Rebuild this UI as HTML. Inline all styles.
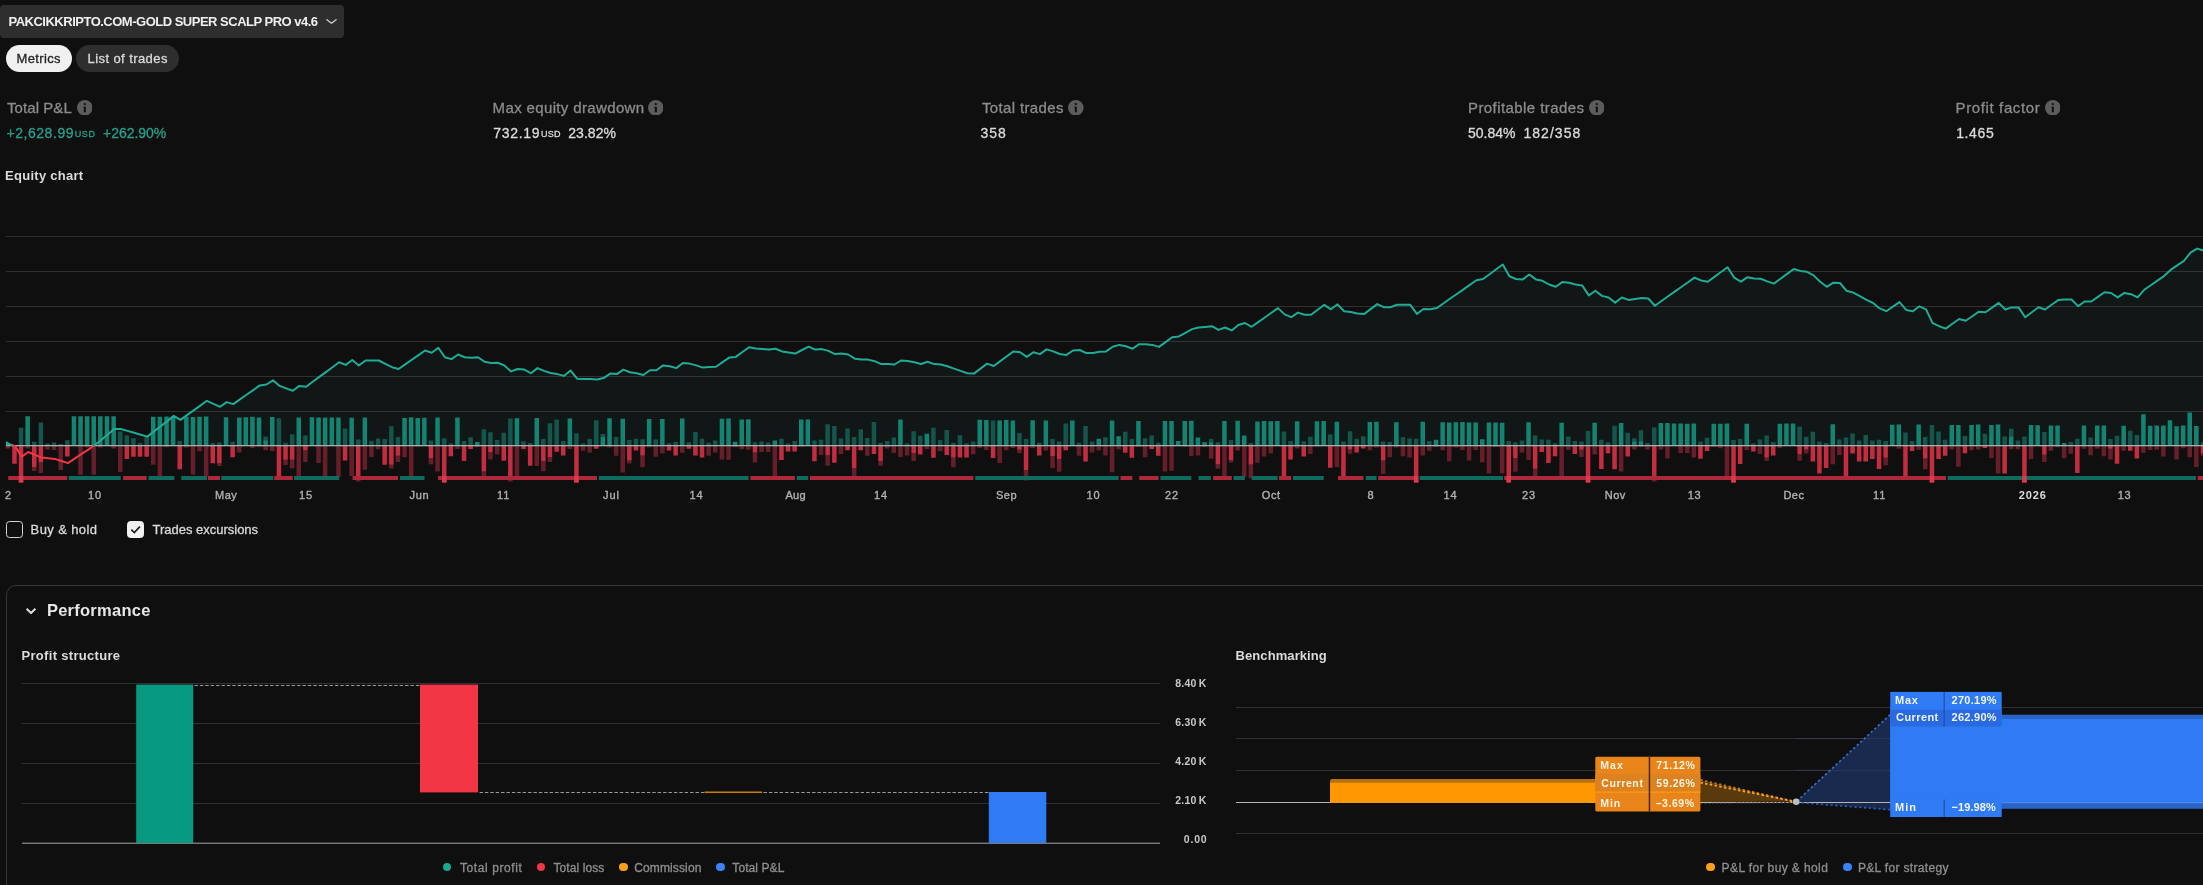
<!DOCTYPE html>
<html lang="en"><head><meta charset="utf-8"><title>Strategy report</title>
<style>
html,body{margin:0;padding:0;background:#0f0f0f;}
body{width:2203px;height:885px;overflow:hidden;position:relative;font-family:"Liberation Sans",sans-serif;color:#dbdbdb;}
.abs{position:absolute;}
.t{position:absolute;white-space:nowrap;line-height:1;}
#tx{position:absolute;left:0;top:0;width:2203px;height:885px;will-change:transform;}
.cb{position:absolute;box-sizing:border-box;width:17px;height:17px;border:1.3px solid #d4d4d4;border-radius:3.5px;top:521px;}
.dot{position:absolute;width:8.4px;height:8.4px;border-radius:50%;top:863px;}
</style></head><body>
<div class="abs" style="left:0;top:5px;width:344px;height:33px;background:#2e2e2e;border-radius:4px"></div>
<svg class="abs" style="left:325px;top:17px" width="13" height="9" viewBox="0 0 13 9"><path d="M1.9 2.7L6.5 6.2 11.1 2.7" fill="none" stroke="#d0d0d0" stroke-width="1.3" stroke-linecap="round" stroke-linejoin="round"/></svg>
<div class="abs" style="left:5.9px;top:45px;width:66.3px;height:27px;border-radius:13.5px;background:#f0f0f0"></div>
<div class="abs" style="left:76.3px;top:45px;width:102.5px;height:27px;border-radius:13.5px;background:#2e2e2e"></div>
<svg class="abs" style="left:76.9px;top:99.7px" width="15.6" height="15.6" viewBox="0 0 15 15"><circle cx="7.5" cy="7.5" r="7.5" fill="#5c5c5c"/><path d="M5.9 6.5h2.6v5.3H6.6V7.4H5.9z" fill="#0f0f0f"/><circle cx="7.5" cy="3.9" r="1.1" fill="#0f0f0f"/></svg>
<svg class="abs" style="left:647.9px;top:99.7px" width="15.6" height="15.6" viewBox="0 0 15 15"><circle cx="7.5" cy="7.5" r="7.5" fill="#5c5c5c"/><path d="M5.9 6.5h2.6v5.3H6.6V7.4H5.9z" fill="#0f0f0f"/><circle cx="7.5" cy="3.9" r="1.1" fill="#0f0f0f"/></svg>
<svg class="abs" style="left:1068.0px;top:99.7px" width="15.6" height="15.6" viewBox="0 0 15 15"><circle cx="7.5" cy="7.5" r="7.5" fill="#5c5c5c"/><path d="M5.9 6.5h2.6v5.3H6.6V7.4H5.9z" fill="#0f0f0f"/><circle cx="7.5" cy="3.9" r="1.1" fill="#0f0f0f"/></svg>
<svg class="abs" style="left:1588.9px;top:99.7px" width="15.6" height="15.6" viewBox="0 0 15 15"><circle cx="7.5" cy="7.5" r="7.5" fill="#5c5c5c"/><path d="M5.9 6.5h2.6v5.3H6.6V7.4H5.9z" fill="#0f0f0f"/><circle cx="7.5" cy="3.9" r="1.1" fill="#0f0f0f"/></svg>
<svg class="abs" style="left:2044.9px;top:99.7px" width="15.6" height="15.6" viewBox="0 0 15 15"><circle cx="7.5" cy="7.5" r="7.5" fill="#5c5c5c"/><path d="M5.9 6.5h2.6v5.3H6.6V7.4H5.9z" fill="#0f0f0f"/><circle cx="7.5" cy="3.9" r="1.1" fill="#0f0f0f"/></svg>
<svg class="abs" style="left:0;top:200px" width="2203" height="300" viewBox="0 200 2203 300">
<rect x="6" y="236" width="2197" height="1" fill="#303030"/>
<rect x="6" y="271" width="2197" height="1" fill="#303030"/>
<rect x="6" y="306" width="2197" height="1" fill="#303030"/>
<rect x="6" y="341" width="2197" height="1" fill="#303030"/>
<rect x="6" y="376" width="2197" height="1" fill="#303030"/>
<rect x="6" y="411" width="2197" height="1" fill="#303030"/>
<polygon points="7.0,445.5 7.0,443.5 15.1,445.5 21.7,445.5 28.3,445.5 35.0,445.5 41.6,445.5 48.2,445.5 54.8,445.5 61.4,445.5 68.0,445.5 74.6,445.5 81.2,445.5 87.9,445.5 94.5,445.3 101.1,439.9 107.7,434.4 114.3,429.0 120.9,429.0 127.5,430.9 134.1,432.8 140.8,434.7 147.4,436.6 154.0,431.4 160.6,426.2 167.2,421.1 173.8,415.9 180.4,419.9 187.0,415.1 193.6,410.4 200.3,405.6 206.9,400.8 213.5,403.8 220.1,406.8 226.7,402.1 233.3,404.1 239.9,399.4 246.5,394.8 253.2,390.1 259.8,385.4 266.4,384.5 273.0,380.3 279.6,385.9 286.2,388.4 292.8,390.8 299.4,385.9 306.1,386.7 312.7,381.8 319.3,376.9 325.9,372.1 332.5,367.2 339.1,362.3 345.7,364.9 352.3,360.0 358.9,365.4 365.6,360.5 372.2,360.5 378.8,360.5 385.4,363.9 392.0,367.2 398.6,369.0 405.2,364.4 411.8,359.8 418.5,355.1 425.1,350.5 431.7,352.7 438.3,347.8 444.9,357.2 451.5,359.1 458.1,354.5 464.7,357.2 471.4,357.8 478.0,357.2 484.6,361.8 491.2,363.0 497.8,362.7 504.4,365.4 511.0,371.4 517.6,369.0 524.2,369.6 530.9,373.2 537.5,368.1 544.1,370.9 550.7,373.0 557.3,374.1 563.9,375.9 570.5,370.5 577.1,378.7 583.8,379.0 590.4,379.0 597.0,379.6 603.6,378.1 610.2,373.6 616.8,374.1 623.4,369.6 630.0,372.3 636.7,373.2 643.3,375.0 649.9,370.3 656.5,370.3 663.1,365.4 669.7,366.3 676.3,368.1 682.9,363.0 689.5,363.6 696.2,365.4 702.8,367.6 709.4,367.1 716.0,366.7 722.6,362.1 729.2,357.6 735.8,356.9 742.4,352.0 749.1,347.2 755.7,348.5 762.3,349.1 768.9,349.6 775.5,348.7 782.1,351.4 788.7,352.5 795.3,353.6 802.0,350.0 808.6,346.7 815.2,349.6 821.8,349.1 828.4,350.9 835.0,354.1 841.6,353.6 848.2,354.5 854.8,358.7 861.5,359.6 868.1,359.6 874.7,361.2 881.3,364.1 887.9,364.1 894.5,364.5 901.1,360.5 907.7,360.9 914.4,362.3 921.0,364.0 927.6,361.8 934.2,364.1 940.8,364.5 947.4,366.3 954.0,368.6 960.6,370.9 967.3,373.2 973.9,373.6 980.5,368.6 987.1,363.6 993.7,366.0 1000.3,361.1 1006.9,356.3 1013.5,351.4 1020.1,352.2 1026.8,356.9 1033.4,352.2 1040.0,354.1 1046.6,349.4 1053.2,351.4 1059.8,354.0 1066.4,354.9 1073.0,350.5 1079.7,350.0 1086.3,353.1 1092.9,353.1 1099.5,351.8 1106.1,351.4 1112.7,346.7 1119.3,344.9 1125.9,346.3 1132.6,348.7 1139.2,344.2 1145.8,344.2 1152.4,344.9 1159.0,346.9 1165.6,342.1 1172.2,337.3 1178.8,336.4 1185.4,332.8 1192.1,329.1 1198.7,327.5 1205.3,326.9 1211.9,326.2 1218.5,329.9 1225.1,327.5 1231.7,330.4 1238.3,325.0 1245.0,323.0 1251.6,326.8 1258.2,322.1 1264.8,317.5 1271.4,312.8 1278.0,308.1 1284.6,314.4 1291.2,317.2 1297.9,312.6 1304.5,314.8 1311.1,314.8 1317.7,309.8 1324.3,304.8 1330.9,309.3 1337.5,304.4 1344.1,311.3 1350.7,312.1 1357.4,313.5 1364.0,314.1 1370.6,309.1 1377.2,304.1 1383.8,307.2 1390.4,307.2 1397.0,304.8 1403.6,304.8 1410.3,304.8 1416.9,313.9 1423.5,309.0 1430.1,309.3 1436.7,308.1 1443.3,303.5 1449.9,298.8 1456.5,294.2 1463.2,289.6 1469.8,284.9 1476.4,280.3 1483.0,279.0 1489.6,274.2 1496.2,269.3 1502.8,264.5 1509.4,276.3 1516.0,279.0 1522.7,279.4 1529.3,274.5 1535.9,279.4 1542.5,280.8 1549.1,284.5 1555.7,286.8 1562.3,282.1 1568.9,282.7 1575.6,284.5 1582.2,285.4 1588.8,295.4 1595.4,290.8 1602.0,295.9 1608.6,297.5 1615.2,302.6 1621.8,297.5 1628.5,299.9 1635.1,299.0 1641.7,298.1 1648.3,298.5 1654.9,305.7 1661.5,301.0 1668.1,296.3 1674.7,291.6 1681.3,287.0 1688.0,282.3 1694.6,277.6 1701.2,280.5 1707.8,281.7 1714.4,276.9 1721.0,272.0 1727.6,267.2 1734.2,277.6 1740.9,281.7 1747.5,277.2 1754.1,278.5 1760.7,278.7 1767.3,281.4 1773.9,283.6 1780.5,278.7 1787.1,273.9 1793.8,269.0 1800.4,270.9 1807.0,271.8 1813.6,275.4 1820.2,281.7 1826.8,286.8 1833.4,282.7 1840.0,283.0 1846.6,290.8 1853.3,292.6 1859.9,296.2 1866.5,299.9 1873.1,303.0 1879.7,308.4 1886.3,311.2 1892.9,306.6 1899.5,302.1 1906.2,309.9 1912.8,311.2 1919.4,306.3 1926.0,309.3 1932.6,323.1 1939.2,326.2 1945.8,328.6 1952.4,323.8 1959.1,319.0 1965.7,320.8 1972.3,316.2 1978.9,311.7 1985.5,312.3 1992.1,307.6 1998.7,302.9 2005.3,309.5 2011.9,307.4 2018.6,307.4 2025.2,317.3 2031.8,312.3 2038.4,307.3 2045.0,309.5 2051.6,304.8 2058.2,300.1 2064.8,299.5 2071.5,299.5 2078.1,306.1 2084.7,301.5 2091.3,301.5 2097.9,296.9 2104.5,292.2 2111.1,293.0 2117.7,297.4 2124.4,292.9 2131.0,294.2 2137.6,297.4 2144.2,289.8 2150.8,285.2 2157.4,280.7 2164.0,276.1 2170.6,269.9 2177.2,265.4 2183.9,260.9 2190.5,252.7 2197.1,248.6 2203.7,250.6 2203.7,445.5" fill="#22ab94" fill-opacity="0.055"/>
<path d="M18.8 427.7h4.5v17.8h-4.5zM32.0 441.7h4.5v3.8h-4.5zM38.6 422.5h4.5v23.0h-4.5zM45.2 443.5h4.5v2.0h-4.5zM51.8 442.6h4.5v2.9h-4.5zM58.5 444.0h4.5v1.5h-4.5zM65.1 440.2h4.5v5.3h-4.5zM118.0 431.5h4.5v14.0h-4.5zM124.6 435.5h4.5v10.0h-4.5zM131.2 438.2h4.5v7.3h-4.5zM137.8 442.9h4.5v2.6h-4.5zM144.4 436.8h4.5v8.7h-4.5zM177.5 441.1h4.5v4.4h-4.5zM210.5 443.0h4.5v2.5h-4.5zM217.1 442.5h4.5v3.0h-4.5zM230.4 441.7h4.5v3.8h-4.5zM263.4 436.6h4.5v3.6h-4.5zM276.7 418.3h4.5v27.2h-4.5zM283.3 442.7h4.5v2.8h-4.5zM289.9 434.3h4.5v11.2h-4.5zM303.1 435.6h4.5v9.9h-4.5zM342.8 428.4h4.5v17.1h-4.5zM356.0 439.6h4.5v5.9h-4.5zM369.2 440.7h4.5v4.8h-4.5zM375.8 438.4h4.5v7.1h-4.5zM382.4 439.0h4.5v6.5h-4.5zM389.1 426.2h4.5v19.3h-4.5zM395.7 436.9h4.5v8.6h-4.5zM428.7 440.6h4.5v4.9h-4.5zM442.0 438.3h4.5v7.2h-4.5zM448.6 443.5h4.5v2.0h-4.5zM461.8 440.9h4.5v4.6h-4.5zM468.4 437.2h4.5v8.3h-4.5zM481.6 429.2h4.5v16.3h-4.5zM488.2 432.3h4.5v13.2h-4.5zM494.9 439.9h4.5v5.6h-4.5zM501.5 432.7h4.5v12.8h-4.5zM508.1 418.6h4.5v26.9h-4.5zM521.3 441.3h4.5v4.2h-4.5zM527.9 443.1h4.5v2.4h-4.5zM541.1 439.1h4.5v6.4h-4.5zM547.7 423.2h4.5v22.3h-4.5zM554.4 419.6h4.5v25.9h-4.5zM561.0 440.9h4.5v4.6h-4.5zM574.2 433.2h4.5v12.3h-4.5zM580.8 443.4h4.5v2.1h-4.5zM587.4 439.1h4.5v6.4h-4.5zM594.0 420.2h4.5v25.3h-4.5zM600.6 434.1h4.5v3.0h-4.5zM613.9 437.1h4.5v8.4h-4.5zM627.1 440.1h4.5v5.4h-4.5zM633.7 438.8h4.5v6.7h-4.5zM640.3 439.2h4.5v6.3h-4.5zM653.5 439.6h4.5v5.9h-4.5zM666.8 443.2h4.5v2.3h-4.5zM673.4 442.0h4.5v3.5h-4.5zM686.6 442.2h4.5v3.3h-4.5zM693.2 432.1h4.5v13.4h-4.5zM699.8 438.8h4.5v6.7h-4.5zM706.4 442.8h4.5v2.7h-4.5zM713.0 440.5h4.5v5.0h-4.5zM752.7 442.3h4.5v3.2h-4.5zM759.3 441.4h4.5v4.1h-4.5zM765.9 442.4h4.5v3.1h-4.5zM779.2 438.7h4.5v6.8h-4.5zM785.8 443.5h4.5v2.0h-4.5zM792.4 441.0h4.5v4.5h-4.5zM812.2 440.6h4.5v4.9h-4.5zM818.8 439.8h4.5v5.7h-4.5zM825.4 424.2h4.5v21.3h-4.5zM832.1 426.1h4.5v19.4h-4.5zM838.7 438.4h4.5v7.1h-4.5zM845.3 428.5h4.5v17.0h-4.5zM851.9 436.9h4.5v8.6h-4.5zM858.5 429.2h4.5v16.3h-4.5zM865.1 437.9h4.5v7.6h-4.5zM871.7 422.0h4.5v23.5h-4.5zM878.3 442.8h4.5v2.7h-4.5zM885.0 441.0h4.5v4.5h-4.5zM891.6 437.6h4.5v7.9h-4.5zM904.8 443.5h4.5v2.0h-4.5zM911.4 431.2h4.5v14.3h-4.5zM918.0 435.7h4.5v9.8h-4.5zM931.2 427.8h4.5v17.7h-4.5zM937.9 440.0h4.5v5.5h-4.5zM944.5 430.1h4.5v15.4h-4.5zM951.1 442.8h4.5v2.7h-4.5zM957.7 435.2h4.5v10.3h-4.5zM964.3 443.2h4.5v2.3h-4.5zM970.9 441.6h4.5v3.9h-4.5zM990.8 420.5h4.5v25.0h-4.5zM1017.2 433.0h4.5v12.5h-4.5zM1023.8 439.0h4.5v6.5h-4.5zM1037.0 442.8h4.5v2.7h-4.5zM1050.3 438.9h4.5v6.6h-4.5zM1056.9 441.6h4.5v3.9h-4.5zM1063.5 423.4h4.5v22.1h-4.5zM1076.7 442.8h4.5v2.7h-4.5zM1083.3 426.1h4.5v19.4h-4.5zM1089.9 441.6h4.5v3.9h-4.5zM1103.2 437.3h4.5v8.2h-4.5zM1123.0 431.8h4.5v13.7h-4.5zM1129.6 438.9h4.5v6.6h-4.5zM1142.8 438.3h4.5v7.2h-4.5zM1149.4 435.4h4.5v10.1h-4.5zM1156.0 442.7h4.5v2.8h-4.5zM1208.9 439.0h4.5v3.3h-4.5zM1215.6 442.3h4.5v3.2h-4.5zM1228.8 440.0h4.5v5.5h-4.5zM1248.6 443.0h4.5v2.5h-4.5zM1281.7 431.6h4.5v13.9h-4.5zM1288.3 440.9h4.5v4.6h-4.5zM1301.5 441.2h4.5v4.3h-4.5zM1308.1 436.8h4.5v8.7h-4.5zM1328.0 434.4h4.5v11.1h-4.5zM1341.2 441.4h4.5v4.1h-4.5zM1347.8 431.3h4.5v14.2h-4.5zM1354.4 438.7h4.5v6.8h-4.5zM1361.0 436.3h4.5v9.2h-4.5zM1380.9 441.5h4.5v4.0h-4.5zM1387.5 442.0h4.5v3.5h-4.5zM1400.7 437.2h4.5v8.3h-4.5zM1407.3 438.4h4.5v7.1h-4.5zM1413.9 438.8h4.5v6.7h-4.5zM1427.1 440.9h4.5v4.6h-4.5zM1506.5 441.1h4.5v4.4h-4.5zM1513.1 442.2h4.5v3.3h-4.5zM1519.7 440.5h4.5v5.0h-4.5zM1532.9 435.5h4.5v10.0h-4.5zM1539.5 439.6h4.5v5.9h-4.5zM1546.2 439.7h4.5v5.8h-4.5zM1552.8 443.3h4.5v2.2h-4.5zM1566.0 436.6h4.5v8.9h-4.5zM1572.6 441.0h4.5v4.5h-4.5zM1579.2 441.4h4.5v4.1h-4.5zM1585.8 431.0h4.5v14.5h-4.5zM1599.1 439.8h4.5v5.7h-4.5zM1605.7 442.3h4.5v3.2h-4.5zM1612.3 425.8h4.5v19.7h-4.5zM1625.5 432.8h4.5v12.7h-4.5zM1632.1 438.3h4.5v3.0h-4.5zM1638.7 430.2h4.5v11.1h-4.5zM1645.3 442.7h4.5v2.8h-4.5zM1652.0 427.4h4.5v18.1h-4.5zM1698.2 441.5h4.5v4.0h-4.5zM1704.8 437.7h4.5v7.8h-4.5zM1731.3 439.9h4.5v5.6h-4.5zM1737.9 439.0h4.5v6.5h-4.5zM1751.1 443.4h4.5v2.1h-4.5zM1757.7 439.6h4.5v5.9h-4.5zM1764.4 435.4h4.5v10.1h-4.5zM1771.0 442.1h4.5v3.4h-4.5zM1797.4 426.4h4.5v19.1h-4.5zM1804.0 436.7h4.5v8.8h-4.5zM1810.6 431.8h4.5v13.7h-4.5zM1817.2 441.5h4.5v4.0h-4.5zM1823.9 442.9h4.5v2.6h-4.5zM1837.1 439.6h4.5v5.9h-4.5zM1843.7 437.6h4.5v7.9h-4.5zM1850.3 433.5h4.5v12.0h-4.5zM1856.9 440.6h4.5v4.9h-4.5zM1863.5 435.0h4.5v10.5h-4.5zM1870.1 440.4h4.5v5.1h-4.5zM1876.8 439.7h4.5v5.8h-4.5zM1883.4 441.1h4.5v4.4h-4.5zM1903.2 432.5h4.5v13.0h-4.5zM1909.8 441.0h4.5v4.5h-4.5zM1923.0 437.0h4.5v8.5h-4.5zM1929.7 425.1h4.5v20.4h-4.5zM1936.3 431.4h4.5v14.1h-4.5zM1942.9 439.7h4.5v5.8h-4.5zM1962.7 436.1h4.5v9.4h-4.5zM1982.6 433.7h4.5v11.8h-4.5zM2002.4 436.5h4.5v9.0h-4.5zM2009.0 428.8h4.5v7.8h-4.5zM2015.6 440.4h4.5v5.1h-4.5zM2022.2 436.6h4.5v8.9h-4.5zM2042.1 432.0h4.5v13.5h-4.5zM2068.5 442.1h4.5v3.4h-4.5zM2075.1 438.8h4.5v6.7h-4.5zM2088.3 437.4h4.5v8.1h-4.5zM2108.2 439.0h4.5v6.5h-4.5zM2114.8 435.7h4.5v9.8h-4.5zM2128.0 430.7h4.5v14.8h-4.5zM2134.6 435.0h4.5v10.5h-4.5zM2200.7 442.3h4.5v3.2h-4.5zM2207.4 438.3h4.5v7.2h-4.5z" fill="#14564c"/>
<path d="M5.6 445.5h4.5v3.0h-4.5zM25.4 445.5h4.5v3.0h-4.5zM32.0 467.1h4.5v3.8h-4.5zM38.6 462.3h4.5v10.6h-4.5zM45.2 445.5h4.5v4.0h-4.5zM51.8 445.5h4.5v4.5h-4.5zM58.5 445.5h4.5v24.5h-4.5zM78.3 445.5h4.5v29.3h-4.5zM84.9 445.5h4.5v2.0h-4.5zM91.5 445.5h4.5v29.3h-4.5zM98.1 445.5h4.5v2.0h-4.5zM111.4 445.5h4.5v3.0h-4.5zM118.0 445.5h4.5v26.4h-4.5zM151.0 445.5h4.5v19.3h-4.5zM157.6 445.5h4.5v31.1h-4.5zM164.3 445.5h4.5v1.8h-4.5zM184.1 445.5h4.5v2.1h-4.5zM190.7 445.5h4.5v29.0h-4.5zM197.3 445.5h4.5v5.7h-4.5zM203.9 445.5h4.5v30.8h-4.5zM217.1 463.2h4.5v2.7h-4.5zM237.0 445.5h4.5v6.9h-4.5zM250.2 445.5h4.5v2.4h-4.5zM256.8 445.5h4.5v1.3h-4.5zM263.4 445.5h4.5v4.8h-4.5zM270.0 445.5h4.5v5.4h-4.5zM283.3 459.8h4.5v5.1h-4.5zM289.9 459.8h4.5v8.4h-4.5zM296.5 445.5h4.5v31.6h-4.5zM303.1 450.2h4.5v11.8h-4.5zM316.3 445.5h4.5v17.4h-4.5zM322.9 445.5h4.5v33.3h-4.5zM336.2 445.5h4.5v31.4h-4.5zM349.4 445.5h4.5v30.5h-4.5zM356.0 476.7h4.5v4.8h-4.5zM362.6 445.5h4.5v24.3h-4.5zM369.2 445.5h4.5v11.5h-4.5zM375.8 445.5h4.5v3.7h-4.5zM389.1 464.8h4.5v3.8h-4.5zM395.7 455.8h4.5v6.2h-4.5zM402.3 445.5h4.5v11.8h-4.5zM408.9 445.5h4.5v31.2h-4.5zM415.5 445.5h4.5v1.2h-4.5zM428.7 458.1h4.5v6.2h-4.5zM435.3 445.5h4.5v26.0h-4.5zM455.2 445.5h4.5v3.6h-4.5zM475.0 445.5h4.5v1.4h-4.5zM481.6 471.6h4.5v8.1h-4.5zM488.2 452.3h4.5v7.3h-4.5zM494.9 445.5h4.5v8.9h-4.5zM508.1 479.4h4.5v2.1h-4.5zM514.7 445.5h4.5v31.4h-4.5zM534.5 445.5h4.5v20.5h-4.5zM541.1 461.3h4.5v9.9h-4.5zM547.7 457.3h4.5v4.6h-4.5zM567.6 445.5h4.5v3.6h-4.5zM580.8 445.5h4.5v5.3h-4.5zM587.4 445.5h4.5v7.1h-4.5zM607.3 445.5h4.5v2.1h-4.5zM613.9 445.5h4.5v10.2h-4.5zM620.5 445.5h4.5v27.1h-4.5zM627.1 460.5h4.5v3.1h-4.5zM640.3 455.5h4.5v11.6h-4.5zM646.9 445.5h4.5v1.7h-4.5zM653.5 445.5h4.5v11.3h-4.5zM660.1 445.5h4.5v8.1h-4.5zM680.0 445.5h4.5v7.3h-4.5zM706.4 445.5h4.5v10.2h-4.5zM713.0 445.5h4.5v7.0h-4.5zM719.7 445.5h4.5v13.9h-4.5zM726.3 445.5h4.5v14.2h-4.5zM732.9 445.5h4.5v1.7h-4.5zM739.5 445.5h4.5v3.7h-4.5zM746.1 445.5h4.5v4.2h-4.5zM752.7 452.6h4.5v10.0h-4.5zM759.3 445.5h4.5v6.6h-4.5zM765.9 445.5h4.5v6.5h-4.5zM772.6 445.5h4.5v33.6h-4.5zM799.0 445.5h4.5v1.3h-4.5zM818.8 445.5h4.5v9.5h-4.5zM825.4 455.2h4.5v10.6h-4.5zM838.7 445.5h4.5v8.4h-4.5zM851.9 468.0h4.5v10.8h-4.5zM865.1 445.5h4.5v10.3h-4.5zM878.3 461.0h4.5v4.8h-4.5zM885.0 445.5h4.5v3.0h-4.5zM891.6 445.5h4.5v7.6h-4.5zM898.2 445.5h4.5v11.4h-4.5zM904.8 445.5h4.5v10.0h-4.5zM911.4 452.9h4.5v8.0h-4.5zM924.6 445.5h4.5v3.6h-4.5zM937.9 445.5h4.5v5.8h-4.5zM951.1 457.6h4.5v9.7h-4.5zM970.9 445.5h4.5v8.7h-4.5zM977.5 445.5h4.5v2.6h-4.5zM984.1 445.5h4.5v4.5h-4.5zM997.4 445.5h4.5v17.6h-4.5zM1004.0 445.5h4.5v4.7h-4.5zM1010.6 445.5h4.5v2.6h-4.5zM1017.2 449.7h4.5v3.6h-4.5zM1023.8 470.0h4.5v10.4h-4.5zM1030.4 445.5h4.5v2.5h-4.5zM1043.6 445.5h4.5v5.0h-4.5zM1050.3 455.9h4.5v12.1h-4.5zM1056.9 459.0h4.5v12.8h-4.5zM1076.7 445.5h4.5v10.3h-4.5zM1089.9 445.5h4.5v7.1h-4.5zM1096.5 445.5h4.5v4.8h-4.5zM1103.2 445.5h4.5v10.1h-4.5zM1109.8 445.5h4.5v26.8h-4.5zM1116.4 445.5h4.5v3.7h-4.5zM1136.2 445.5h4.5v1.5h-4.5zM1142.8 445.5h4.5v11.8h-4.5zM1162.7 445.5h4.5v26.0h-4.5zM1169.3 445.5h4.5v25.2h-4.5zM1182.5 445.5h4.5v1.3h-4.5zM1189.1 445.5h4.5v10.4h-4.5zM1195.7 445.5h4.5v9.9h-4.5zM1202.3 445.5h4.5v1.4h-4.5zM1208.9 445.5h4.5v13.2h-4.5zM1215.6 464.2h4.5v4.6h-4.5zM1222.2 445.5h4.5v31.6h-4.5zM1228.8 460.1h4.5v2.3h-4.5zM1235.4 445.5h4.5v5.0h-4.5zM1242.0 445.5h4.5v31.2h-4.5zM1248.6 464.6h4.5v13.7h-4.5zM1255.2 445.5h4.5v17.2h-4.5zM1261.8 445.5h4.5v10.9h-4.5zM1268.5 445.5h4.5v8.0h-4.5zM1294.9 445.5h4.5v3.0h-4.5zM1308.1 445.5h4.5v8.4h-4.5zM1314.7 445.5h4.5v1.2h-4.5zM1334.6 445.5h4.5v21.6h-4.5zM1347.8 449.4h4.5v4.4h-4.5zM1367.6 445.5h4.5v4.8h-4.5zM1374.2 445.5h4.5v2.1h-4.5zM1380.9 460.6h4.5v13.4h-4.5zM1387.5 445.5h4.5v11.7h-4.5zM1394.1 445.5h4.5v2.0h-4.5zM1400.7 445.5h4.5v10.8h-4.5zM1407.3 445.5h4.5v12.0h-4.5zM1420.5 445.5h4.5v9.9h-4.5zM1427.1 445.5h4.5v5.3h-4.5zM1433.8 445.5h4.5v1.4h-4.5zM1440.4 445.5h4.5v4.8h-4.5zM1447.0 445.5h4.5v15.7h-4.5zM1453.6 445.5h4.5v1.9h-4.5zM1460.2 445.5h4.5v4.5h-4.5zM1466.8 445.5h4.5v15.0h-4.5zM1473.4 445.5h4.5v4.6h-4.5zM1480.0 445.5h4.5v16.7h-4.5zM1486.7 445.5h4.5v27.9h-4.5zM1493.3 445.5h4.5v1.4h-4.5zM1499.9 445.5h4.5v28.1h-4.5zM1513.1 458.3h4.5v13.4h-4.5zM1519.7 445.5h4.5v6.9h-4.5zM1526.3 445.5h4.5v14.6h-4.5zM1532.9 468.7h4.5v11.3h-4.5zM1559.4 445.5h4.5v32.1h-4.5zM1566.0 445.5h4.5v4.6h-4.5zM1579.2 449.7h4.5v7.4h-4.5zM1592.4 445.5h4.5v8.8h-4.5zM1618.9 445.5h4.5v26.1h-4.5zM1632.1 445.5h4.5v4.1h-4.5zM1638.7 445.5h4.5v1.5h-4.5zM1645.3 445.5h4.5v3.9h-4.5zM1652.0 478.6h4.5v2.9h-4.5zM1658.6 445.5h4.5v3.9h-4.5zM1665.2 445.5h4.5v13.1h-4.5zM1678.4 445.5h4.5v7.6h-4.5zM1685.0 445.5h4.5v7.4h-4.5zM1691.6 445.5h4.5v12.1h-4.5zM1711.5 445.5h4.5v1.4h-4.5zM1718.1 445.5h4.5v2.8h-4.5zM1724.7 445.5h4.5v33.9h-4.5zM1744.5 445.5h4.5v4.4h-4.5zM1757.7 445.5h4.5v8.4h-4.5zM1764.4 457.6h4.5v3.1h-4.5zM1777.6 445.5h4.5v2.5h-4.5zM1797.4 454.0h4.5v6.7h-4.5zM1804.0 449.5h4.5v3.9h-4.5zM1830.5 445.5h4.5v18.7h-4.5zM1837.1 445.5h4.5v9.6h-4.5zM1883.4 457.7h4.5v7.5h-4.5zM1896.6 445.5h4.5v3.2h-4.5zM1916.4 445.5h4.5v4.3h-4.5zM1923.0 458.5h4.5v10.8h-4.5zM1949.5 445.5h4.5v4.1h-4.5zM1956.1 445.5h4.5v21.3h-4.5zM1969.3 445.5h4.5v4.7h-4.5zM1975.9 445.5h4.5v3.9h-4.5zM1989.2 445.5h4.5v12.5h-4.5zM1995.8 445.5h4.5v28.1h-4.5zM2009.0 445.5h4.5v3.8h-4.5zM2015.6 445.5h4.5v3.8h-4.5zM2028.8 445.5h4.5v13.6h-4.5zM2042.1 454.7h4.5v7.2h-4.5zM2048.7 445.5h4.5v5.3h-4.5zM2055.3 445.5h4.5v1.8h-4.5zM2061.9 445.5h4.5v12.7h-4.5zM2068.5 445.5h4.5v8.2h-4.5zM2081.7 445.5h4.5v3.2h-4.5zM2088.3 445.5h4.5v9.8h-4.5zM2095.0 445.5h4.5v3.2h-4.5zM2101.6 445.5h4.5v10.8h-4.5zM2108.2 448.8h4.5v10.8h-4.5zM2121.4 445.5h4.5v5.2h-4.5zM2141.2 445.5h4.5v7.3h-4.5zM2147.9 445.5h4.5v4.4h-4.5zM2154.5 445.5h4.5v4.2h-4.5zM2161.1 445.5h4.5v10.9h-4.5zM2174.3 445.5h4.5v14.0h-4.5zM2180.9 445.5h4.5v2.8h-4.5zM2187.5 445.5h4.5v11.8h-4.5zM2194.1 445.5h4.5v21.5h-4.5zM2200.7 453.6h4.5v2.2h-4.5zM2207.4 445.5h4.5v11.4h-4.5z" fill="#661f2a"/>
<path d="M25.4 416.2h4.5v29.3h-4.5zM71.7 416.3h4.5v29.2h-4.5zM78.3 416.3h4.5v29.2h-4.5zM84.9 416.3h4.5v29.2h-4.5zM91.5 416.3h4.5v29.2h-4.5zM98.1 416.3h4.5v29.2h-4.5zM104.7 416.3h4.5v29.2h-4.5zM111.4 416.3h4.5v29.2h-4.5zM151.0 416.8h4.5v28.7h-4.5zM157.6 416.7h4.5v28.8h-4.5zM164.3 416.4h4.5v29.1h-4.5zM170.9 416.4h4.5v29.1h-4.5zM184.1 416.7h4.5v28.8h-4.5zM190.7 416.9h4.5v28.6h-4.5zM197.3 416.8h4.5v28.7h-4.5zM203.9 416.5h4.5v29.0h-4.5zM223.8 417.2h4.5v28.3h-4.5zM237.0 417.4h4.5v28.1h-4.5zM243.6 417.2h4.5v28.3h-4.5zM250.2 416.8h4.5v28.7h-4.5zM256.8 417.4h4.5v28.1h-4.5zM263.4 440.2h4.5v5.3h-4.5zM270.0 417.1h4.5v28.4h-4.5zM296.5 417.4h4.5v28.1h-4.5zM309.7 417.3h4.5v28.2h-4.5zM316.3 417.5h4.5v28.0h-4.5zM322.9 417.4h4.5v28.1h-4.5zM329.6 417.5h4.5v28.0h-4.5zM336.2 417.6h4.5v27.9h-4.5zM349.4 417.8h4.5v27.7h-4.5zM362.6 417.6h4.5v27.9h-4.5zM402.3 418.0h4.5v27.5h-4.5zM408.9 417.3h4.5v28.2h-4.5zM415.5 417.9h4.5v27.6h-4.5zM422.1 417.7h4.5v27.8h-4.5zM435.3 417.5h4.5v28.0h-4.5zM455.2 417.6h4.5v27.9h-4.5zM475.0 442.1h4.5v3.4h-4.5zM514.7 418.3h4.5v27.2h-4.5zM534.5 418.1h4.5v27.4h-4.5zM567.6 418.5h4.5v27.0h-4.5zM600.6 437.1h4.5v8.4h-4.5zM607.3 418.3h4.5v27.2h-4.5zM620.5 418.7h4.5v26.8h-4.5zM646.9 419.0h4.5v26.5h-4.5zM660.1 418.9h4.5v26.6h-4.5zM680.0 418.6h4.5v26.9h-4.5zM719.7 418.7h4.5v26.8h-4.5zM726.3 418.6h4.5v26.9h-4.5zM732.9 441.7h4.5v3.8h-4.5zM739.5 419.4h4.5v26.1h-4.5zM746.1 419.2h4.5v26.3h-4.5zM772.6 440.6h4.5v4.9h-4.5zM799.0 419.5h4.5v26.0h-4.5zM805.6 419.6h4.5v25.9h-4.5zM898.2 419.6h4.5v25.9h-4.5zM924.6 433.8h4.5v11.7h-4.5zM977.5 419.8h4.5v25.7h-4.5zM984.1 420.1h4.5v25.4h-4.5zM997.4 420.5h4.5v25.0h-4.5zM1004.0 420.1h4.5v25.4h-4.5zM1010.6 420.4h4.5v25.1h-4.5zM1030.4 420.2h4.5v25.3h-4.5zM1043.6 420.4h4.5v25.1h-4.5zM1070.1 420.5h4.5v25.0h-4.5zM1096.5 438.8h4.5v6.7h-4.5zM1109.8 420.4h4.5v25.1h-4.5zM1116.4 436.2h4.5v9.3h-4.5zM1136.2 420.9h4.5v24.6h-4.5zM1162.7 421.0h4.5v24.5h-4.5zM1169.3 421.0h4.5v24.5h-4.5zM1175.9 440.9h4.5v4.6h-4.5zM1182.5 421.0h4.5v24.5h-4.5zM1189.1 420.8h4.5v24.7h-4.5zM1195.7 437.4h4.5v8.1h-4.5zM1202.3 442.2h4.5v3.3h-4.5zM1208.9 442.2h4.5v3.3h-4.5zM1222.2 421.1h4.5v24.4h-4.5zM1235.4 420.8h4.5v24.7h-4.5zM1242.0 435.4h4.5v10.1h-4.5zM1255.2 421.5h4.5v24.0h-4.5zM1261.8 421.0h4.5v24.5h-4.5zM1268.5 421.2h4.5v24.3h-4.5zM1275.1 421.0h4.5v24.5h-4.5zM1294.9 421.3h4.5v24.2h-4.5zM1314.7 421.2h4.5v24.3h-4.5zM1321.4 421.1h4.5v24.4h-4.5zM1334.6 421.8h4.5v23.7h-4.5zM1367.6 422.0h4.5v23.5h-4.5zM1374.2 421.8h4.5v23.7h-4.5zM1394.1 422.2h4.5v23.3h-4.5zM1420.5 421.8h4.5v23.7h-4.5zM1433.8 439.7h4.5v5.8h-4.5zM1440.4 422.2h4.5v23.3h-4.5zM1447.0 422.4h4.5v23.1h-4.5zM1453.6 422.2h4.5v23.3h-4.5zM1460.2 421.9h4.5v23.6h-4.5zM1466.8 422.6h4.5v22.9h-4.5zM1473.4 422.6h4.5v22.9h-4.5zM1480.0 439.3h4.5v6.2h-4.5zM1486.7 422.5h4.5v23.0h-4.5zM1493.3 422.6h4.5v22.9h-4.5zM1499.9 422.8h4.5v22.7h-4.5zM1526.3 422.2h4.5v23.3h-4.5zM1559.4 422.7h4.5v22.8h-4.5zM1592.4 422.7h4.5v22.8h-4.5zM1618.9 423.1h4.5v22.4h-4.5zM1632.1 441.3h4.5v4.2h-4.5zM1638.7 441.3h4.5v4.2h-4.5zM1658.6 422.9h4.5v22.6h-4.5zM1665.2 422.9h4.5v22.6h-4.5zM1671.8 423.5h4.5v22.0h-4.5zM1678.4 423.5h4.5v22.0h-4.5zM1685.0 423.7h4.5v21.8h-4.5zM1691.6 423.5h4.5v22.0h-4.5zM1711.5 423.7h4.5v21.8h-4.5zM1718.1 423.7h4.5v21.8h-4.5zM1724.7 423.6h4.5v21.9h-4.5zM1744.5 423.7h4.5v21.8h-4.5zM1777.6 423.8h4.5v21.7h-4.5zM1784.2 423.6h4.5v21.9h-4.5zM1790.8 423.5h4.5v22.0h-4.5zM1830.5 424.3h4.5v21.2h-4.5zM1890.0 424.7h4.5v20.8h-4.5zM1896.6 424.4h4.5v21.1h-4.5zM1916.4 424.6h4.5v20.9h-4.5zM1949.5 424.9h4.5v20.6h-4.5zM1956.1 425.0h4.5v20.5h-4.5zM1969.3 425.1h4.5v20.4h-4.5zM1975.9 424.6h4.5v20.9h-4.5zM1989.2 425.0h4.5v20.5h-4.5zM1995.8 424.6h4.5v20.9h-4.5zM2009.0 436.6h4.5v8.9h-4.5zM2028.8 424.9h4.5v20.6h-4.5zM2035.4 425.2h4.5v20.3h-4.5zM2048.7 425.4h4.5v20.1h-4.5zM2055.3 425.6h4.5v19.9h-4.5zM2061.9 443.0h4.5v2.5h-4.5zM2081.7 425.5h4.5v20.0h-4.5zM2095.0 425.5h4.5v20.0h-4.5zM2101.6 425.4h4.5v20.1h-4.5zM2121.4 425.7h4.5v19.8h-4.5zM2141.2 414.3h4.5v31.2h-4.5zM2147.9 425.8h4.5v19.7h-4.5zM2154.5 425.5h4.5v20.0h-4.5zM2161.1 425.5h4.5v20.0h-4.5zM2167.7 420.3h4.5v25.2h-4.5zM2174.3 426.2h4.5v19.3h-4.5zM2180.9 425.5h4.5v20.0h-4.5zM2187.5 412.5h4.5v33.0h-4.5zM2194.1 426.1h4.5v19.4h-4.5z" fill="#138471"/>
<path d="M12.2 445.5h4.5v18.2h-4.5zM18.8 445.5h4.5v37.0h-4.5zM32.0 445.5h4.5v21.6h-4.5zM38.6 445.5h4.5v16.8h-4.5zM65.1 445.5h4.5v11.0h-4.5zM124.6 445.5h4.5v13.4h-4.5zM131.2 445.5h4.5v11.3h-4.5zM137.8 445.5h4.5v11.3h-4.5zM144.4 445.5h4.5v11.3h-4.5zM177.5 445.5h4.5v23.7h-4.5zM210.5 445.5h4.5v17.7h-4.5zM217.1 445.5h4.5v17.7h-4.5zM230.4 445.5h4.5v11.8h-4.5zM276.7 445.5h4.5v32.7h-4.5zM283.3 445.5h4.5v14.3h-4.5zM289.9 445.5h4.5v14.3h-4.5zM303.1 445.5h4.5v4.7h-4.5zM342.8 445.5h4.5v15.1h-4.5zM356.0 445.5h4.5v31.2h-4.5zM382.4 445.5h4.5v19.3h-4.5zM389.1 445.5h4.5v19.3h-4.5zM395.7 445.5h4.5v10.3h-4.5zM428.7 445.5h4.5v12.6h-4.5zM442.0 445.5h4.5v37.0h-4.5zM448.6 445.5h4.5v10.8h-4.5zM461.8 445.5h4.5v15.4h-4.5zM468.4 445.5h4.5v3.4h-4.5zM481.6 445.5h4.5v26.1h-4.5zM488.2 445.5h4.5v6.8h-4.5zM501.5 445.5h4.5v15.3h-4.5zM508.1 445.5h4.5v33.9h-4.5zM521.3 445.5h4.5v3.4h-4.5zM527.9 445.5h4.5v20.3h-4.5zM541.1 445.5h4.5v15.8h-4.5zM547.7 445.5h4.5v11.8h-4.5zM554.4 445.5h4.5v6.2h-4.5zM561.0 445.5h4.5v10.1h-4.5zM574.2 445.5h4.5v37.0h-4.5zM594.0 445.5h4.5v3.3h-4.5zM627.1 445.5h4.5v15.0h-4.5zM633.7 445.5h4.5v5.0h-4.5zM640.3 445.5h4.5v10.0h-4.5zM666.8 445.5h4.5v5.0h-4.5zM673.4 445.5h4.5v9.9h-4.5zM686.6 445.5h4.5v3.3h-4.5zM693.2 445.5h4.5v9.9h-4.5zM699.8 445.5h4.5v12.1h-4.5zM752.7 445.5h4.5v7.1h-4.5zM779.2 445.5h4.5v14.6h-4.5zM785.8 445.5h4.5v6.0h-4.5zM792.4 445.5h4.5v6.0h-4.5zM812.2 445.5h4.5v15.7h-4.5zM825.4 445.5h4.5v9.7h-4.5zM832.1 445.5h4.5v17.2h-4.5zM845.3 445.5h4.5v4.8h-4.5zM851.9 445.5h4.5v22.5h-4.5zM858.5 445.5h4.5v4.8h-4.5zM871.7 445.5h4.5v8.6h-4.5zM878.3 445.5h4.5v15.5h-4.5zM911.4 445.5h4.5v7.4h-4.5zM918.0 445.5h4.5v9.0h-4.5zM931.2 445.5h4.5v12.2h-4.5zM944.5 445.5h4.5v9.5h-4.5zM951.1 445.5h4.5v12.1h-4.5zM957.7 445.5h4.5v12.1h-4.5zM964.3 445.5h4.5v12.1h-4.5zM990.8 445.5h4.5v12.6h-4.5zM1017.2 445.5h4.5v4.2h-4.5zM1023.8 445.5h4.5v24.5h-4.5zM1037.0 445.5h4.5v9.9h-4.5zM1050.3 445.5h4.5v10.4h-4.5zM1056.9 445.5h4.5v13.5h-4.5zM1063.5 445.5h4.5v4.7h-4.5zM1083.3 445.5h4.5v16.0h-4.5zM1123.0 445.5h4.5v7.2h-4.5zM1129.6 445.5h4.5v12.3h-4.5zM1149.4 445.5h4.5v3.6h-4.5zM1156.0 445.5h4.5v10.2h-4.5zM1215.6 445.5h4.5v18.7h-4.5zM1228.8 445.5h4.5v14.6h-4.5zM1248.6 445.5h4.5v19.1h-4.5zM1281.7 445.5h4.5v31.4h-4.5zM1288.3 445.5h4.5v13.9h-4.5zM1301.5 445.5h4.5v10.9h-4.5zM1328.0 445.5h4.5v22.2h-4.5zM1341.2 445.5h4.5v34.0h-4.5zM1347.8 445.5h4.5v3.9h-4.5zM1354.4 445.5h4.5v6.9h-4.5zM1361.0 445.5h4.5v2.9h-4.5zM1380.9 445.5h4.5v15.1h-4.5zM1413.9 445.5h4.5v37.0h-4.5zM1506.5 445.5h4.5v37.0h-4.5zM1513.1 445.5h4.5v12.8h-4.5zM1532.9 445.5h4.5v23.2h-4.5zM1539.5 445.5h4.5v6.6h-4.5zM1546.2 445.5h4.5v17.4h-4.5zM1552.8 445.5h4.5v10.8h-4.5zM1572.6 445.5h4.5v8.4h-4.5zM1579.2 445.5h4.5v4.2h-4.5zM1585.8 445.5h4.5v37.0h-4.5zM1599.1 445.5h4.5v23.5h-4.5zM1605.7 445.5h4.5v7.7h-4.5zM1612.3 445.5h4.5v23.7h-4.5zM1625.5 445.5h4.5v11.1h-4.5zM1652.0 445.5h4.5v33.1h-4.5zM1698.2 445.5h4.5v13.2h-4.5zM1704.8 445.5h4.5v5.5h-4.5zM1731.3 445.5h4.5v37.0h-4.5zM1737.9 445.5h4.5v18.5h-4.5zM1751.1 445.5h4.5v5.9h-4.5zM1764.4 445.5h4.5v12.1h-4.5zM1771.0 445.5h4.5v9.9h-4.5zM1797.4 445.5h4.5v8.5h-4.5zM1804.0 445.5h4.5v4.0h-4.5zM1810.6 445.5h4.5v16.0h-4.5zM1817.2 445.5h4.5v27.9h-4.5zM1823.9 445.5h4.5v22.6h-4.5zM1843.7 445.5h4.5v34.4h-4.5zM1850.3 445.5h4.5v7.9h-4.5zM1856.9 445.5h4.5v16.0h-4.5zM1863.5 445.5h4.5v16.0h-4.5zM1870.1 445.5h4.5v13.6h-4.5zM1876.8 445.5h4.5v23.6h-4.5zM1883.4 445.5h4.5v12.2h-4.5zM1903.2 445.5h4.5v33.9h-4.5zM1909.8 445.5h4.5v5.6h-4.5zM1923.0 445.5h4.5v13.0h-4.5zM1929.7 445.5h4.5v37.0h-4.5zM1936.3 445.5h4.5v13.4h-4.5zM1942.9 445.5h4.5v10.3h-4.5zM1962.7 445.5h4.5v7.7h-4.5zM1982.6 445.5h4.5v2.6h-4.5zM2002.4 445.5h4.5v28.0h-4.5zM2022.2 445.5h4.5v37.0h-4.5zM2042.1 445.5h4.5v9.2h-4.5zM2075.1 445.5h4.5v27.5h-4.5zM2108.2 445.5h4.5v3.3h-4.5zM2114.8 445.5h4.5v18.2h-4.5zM2128.0 445.5h4.5v5.3h-4.5zM2134.6 445.5h4.5v13.1h-4.5zM2200.7 445.5h4.5v8.1h-4.5z" fill="#c42c41"/>
<rect x="8.2" y="476" width="59.0" height="4" fill="#ac293c"/>
<rect x="68.6" y="476" width="52.1" height="4" fill="#116a5e"/>
<rect x="123.1" y="476" width="23.6" height="4" fill="#ac293c"/>
<rect x="148.5" y="476" width="25.8" height="4" fill="#116a5e"/>
<rect x="181.2" y="476" width="25.8" height="4" fill="#116a5e"/>
<rect x="207.9" y="476" width="12.1" height="4" fill="#ac293c"/>
<rect x="221.2" y="476" width="52.1" height="4" fill="#116a5e"/>
<rect x="274.2" y="476" width="18.5" height="4" fill="#ac293c"/>
<rect x="294.1" y="476" width="45.1" height="4" fill="#116a5e"/>
<rect x="352.6" y="476" width="45.4" height="4" fill="#ac293c"/>
<rect x="400.0" y="476" width="24.5" height="4" fill="#116a5e"/>
<rect x="438.1" y="476" width="158.9" height="4" fill="#ac293c"/>
<rect x="598.8" y="476" width="149.8" height="4" fill="#116a5e"/>
<rect x="750.4" y="476" width="44.5" height="4" fill="#ac293c"/>
<rect x="796.7" y="476" width="11.5" height="4" fill="#116a5e"/>
<rect x="810.0" y="476" width="163.4" height="4" fill="#ac293c"/>
<rect x="975.2" y="476" width="143.5" height="4" fill="#116a5e"/>
<rect x="1120.5" y="476" width="11.8" height="4" fill="#ac293c"/>
<rect x="1139.2" y="476" width="19.4" height="4" fill="#ac293c"/>
<rect x="1160.4" y="476" width="30.9" height="4" fill="#116a5e"/>
<rect x="1198.5" y="476" width="12.4" height="4" fill="#116a5e"/>
<rect x="1213.2" y="476" width="18.6" height="4" fill="#ac293c"/>
<rect x="1233.6" y="476" width="11.3" height="4" fill="#116a5e"/>
<rect x="1251.7" y="476" width="25.9" height="4" fill="#116a5e"/>
<rect x="1279.0" y="476" width="12.2" height="4" fill="#ac293c"/>
<rect x="1293.0" y="476" width="30.7" height="4" fill="#116a5e"/>
<rect x="1338.0" y="476" width="25.4" height="4" fill="#ac293c"/>
<rect x="1365.7" y="476" width="10.9" height="4" fill="#116a5e"/>
<rect x="1378.2" y="476" width="39.7" height="4" fill="#ac293c"/>
<rect x="1419.7" y="476" width="83.3" height="4" fill="#116a5e"/>
<rect x="1504.1" y="476" width="441.9" height="4" fill="#ac293c"/>
<rect x="1947.7" y="476" width="248.3" height="4" fill="#116a5e"/>
<rect x="2197.7" y="476" width="5.3" height="4" fill="#ac293c"/>
<path d="M18.8 476.0h4.5v6.5h-4.5zM442.0 476.0h4.5v6.5h-4.5zM574.2 476.0h4.5v6.5h-4.5zM1413.9 476.0h4.5v6.5h-4.5zM1506.5 476.0h4.5v6.5h-4.5zM1585.8 476.0h4.5v6.5h-4.5zM1731.3 476.0h4.5v6.5h-4.5zM1929.7 476.0h4.5v6.5h-4.5zM2022.2 476.0h4.5v6.5h-4.5z" fill="#d93a50"/>
<rect x="6" y="445" width="2197" height="1.3" fill="#a9adab"/>
<polyline fill="none" stroke="#22ab94" stroke-width="2" stroke-linejoin="round" stroke-linecap="round" points="7.0,443.5 13.0,445.5"/>
<polyline fill="none" stroke="#f23645" stroke-width="2" stroke-linejoin="round" stroke-linecap="round" points="13.0,445.5 15.1,446.2 21.7,456.6 28.3,452.0 35.0,454.8 41.6,457.6 48.2,458.2 54.8,458.9 61.4,461.0 68.0,463.1 74.6,458.7 81.2,454.2 87.9,449.8 94.2,445.5"/>
<polyline fill="none" stroke="#22ab94" stroke-width="2" stroke-linejoin="round" stroke-linecap="round" points="94.2,445.5 94.5,445.3 101.1,439.9 107.7,434.4 114.3,429.0 120.9,429.0 127.5,430.9 134.1,432.8 140.8,434.7 147.4,436.6 154.0,431.4 160.6,426.2 167.2,421.1 173.8,415.9 180.4,419.9 187.0,415.1 193.6,410.4 200.3,405.6 206.9,400.8 213.5,403.8 220.1,406.8 226.7,402.1 233.3,404.1 239.9,399.4 246.5,394.8 253.2,390.1 259.8,385.4 266.4,384.5 273.0,380.3 279.6,385.9 286.2,388.4 292.8,390.8 299.4,385.9 306.1,386.7 312.7,381.8 319.3,376.9 325.9,372.1 332.5,367.2 339.1,362.3 345.7,364.9 352.3,360.0 358.9,365.4 365.6,360.5 372.2,360.5 378.8,360.5 385.4,363.9 392.0,367.2 398.6,369.0 405.2,364.4 411.8,359.8 418.5,355.1 425.1,350.5 431.7,352.7 438.3,347.8 444.9,357.2 451.5,359.1 458.1,354.5 464.7,357.2 471.4,357.8 478.0,357.2 484.6,361.8 491.2,363.0 497.8,362.7 504.4,365.4 511.0,371.4 517.6,369.0 524.2,369.6 530.9,373.2 537.5,368.1 544.1,370.9 550.7,373.0 557.3,374.1 563.9,375.9 570.5,370.5 577.1,378.7 583.8,379.0 590.4,379.0 597.0,379.6 603.6,378.1 610.2,373.6 616.8,374.1 623.4,369.6 630.0,372.3 636.7,373.2 643.3,375.0 649.9,370.3 656.5,370.3 663.1,365.4 669.7,366.3 676.3,368.1 682.9,363.0 689.5,363.6 696.2,365.4 702.8,367.6 709.4,367.1 716.0,366.7 722.6,362.1 729.2,357.6 735.8,356.9 742.4,352.0 749.1,347.2 755.7,348.5 762.3,349.1 768.9,349.6 775.5,348.7 782.1,351.4 788.7,352.5 795.3,353.6 802.0,350.0 808.6,346.7 815.2,349.6 821.8,349.1 828.4,350.9 835.0,354.1 841.6,353.6 848.2,354.5 854.8,358.7 861.5,359.6 868.1,359.6 874.7,361.2 881.3,364.1 887.9,364.1 894.5,364.5 901.1,360.5 907.7,360.9 914.4,362.3 921.0,364.0 927.6,361.8 934.2,364.1 940.8,364.5 947.4,366.3 954.0,368.6 960.6,370.9 967.3,373.2 973.9,373.6 980.5,368.6 987.1,363.6 993.7,366.0 1000.3,361.1 1006.9,356.3 1013.5,351.4 1020.1,352.2 1026.8,356.9 1033.4,352.2 1040.0,354.1 1046.6,349.4 1053.2,351.4 1059.8,354.0 1066.4,354.9 1073.0,350.5 1079.7,350.0 1086.3,353.1 1092.9,353.1 1099.5,351.8 1106.1,351.4 1112.7,346.7 1119.3,344.9 1125.9,346.3 1132.6,348.7 1139.2,344.2 1145.8,344.2 1152.4,344.9 1159.0,346.9 1165.6,342.1 1172.2,337.3 1178.8,336.4 1185.4,332.8 1192.1,329.1 1198.7,327.5 1205.3,326.9 1211.9,326.2 1218.5,329.9 1225.1,327.5 1231.7,330.4 1238.3,325.0 1245.0,323.0 1251.6,326.8 1258.2,322.1 1264.8,317.5 1271.4,312.8 1278.0,308.1 1284.6,314.4 1291.2,317.2 1297.9,312.6 1304.5,314.8 1311.1,314.8 1317.7,309.8 1324.3,304.8 1330.9,309.3 1337.5,304.4 1344.1,311.3 1350.7,312.1 1357.4,313.5 1364.0,314.1 1370.6,309.1 1377.2,304.1 1383.8,307.2 1390.4,307.2 1397.0,304.8 1403.6,304.8 1410.3,304.8 1416.9,313.9 1423.5,309.0 1430.1,309.3 1436.7,308.1 1443.3,303.5 1449.9,298.8 1456.5,294.2 1463.2,289.6 1469.8,284.9 1476.4,280.3 1483.0,279.0 1489.6,274.2 1496.2,269.3 1502.8,264.5 1509.4,276.3 1516.0,279.0 1522.7,279.4 1529.3,274.5 1535.9,279.4 1542.5,280.8 1549.1,284.5 1555.7,286.8 1562.3,282.1 1568.9,282.7 1575.6,284.5 1582.2,285.4 1588.8,295.4 1595.4,290.8 1602.0,295.9 1608.6,297.5 1615.2,302.6 1621.8,297.5 1628.5,299.9 1635.1,299.0 1641.7,298.1 1648.3,298.5 1654.9,305.7 1661.5,301.0 1668.1,296.3 1674.7,291.6 1681.3,287.0 1688.0,282.3 1694.6,277.6 1701.2,280.5 1707.8,281.7 1714.4,276.9 1721.0,272.0 1727.6,267.2 1734.2,277.6 1740.9,281.7 1747.5,277.2 1754.1,278.5 1760.7,278.7 1767.3,281.4 1773.9,283.6 1780.5,278.7 1787.1,273.9 1793.8,269.0 1800.4,270.9 1807.0,271.8 1813.6,275.4 1820.2,281.7 1826.8,286.8 1833.4,282.7 1840.0,283.0 1846.6,290.8 1853.3,292.6 1859.9,296.2 1866.5,299.9 1873.1,303.0 1879.7,308.4 1886.3,311.2 1892.9,306.6 1899.5,302.1 1906.2,309.9 1912.8,311.2 1919.4,306.3 1926.0,309.3 1932.6,323.1 1939.2,326.2 1945.8,328.6 1952.4,323.8 1959.1,319.0 1965.7,320.8 1972.3,316.2 1978.9,311.7 1985.5,312.3 1992.1,307.6 1998.7,302.9 2005.3,309.5 2011.9,307.4 2018.6,307.4 2025.2,317.3 2031.8,312.3 2038.4,307.3 2045.0,309.5 2051.6,304.8 2058.2,300.1 2064.8,299.5 2071.5,299.5 2078.1,306.1 2084.7,301.5 2091.3,301.5 2097.9,296.9 2104.5,292.2 2111.1,293.0 2117.7,297.4 2124.4,292.9 2131.0,294.2 2137.6,297.4 2144.2,289.8 2150.8,285.2 2157.4,280.7 2164.0,276.1 2170.6,269.9 2177.2,265.4 2183.9,260.9 2190.5,252.7 2197.1,248.6 2203.7,250.6"/>
<path d="M6 441l4 2.6-4 2.6z" fill="#22ab94"/>
</svg>
<div class="cb" style="left:6.2px"></div>
<div class="cb" style="left:127px;background:#f2f2f2;border-color:#f2f2f2"></div><svg class="abs" style="left:127px;top:521px" width="17" height="17" viewBox="0 0 17 17"><path d="M4.3 8.6l3 3 5.6-6" fill="none" stroke="#1f1f1f" stroke-width="1.7"/></svg>
<div class="abs" style="left:6px;top:585px;width:2300px;height:400px;border:1px solid #363636;border-radius:10px;box-sizing:border-box"></div>
<svg class="abs" style="left:24px;top:605px" width="14" height="12" viewBox="0 0 14 12"><path d="M2.6 3.8l4.4 4.2 4.4-4.2" fill="none" stroke="#dbdbdb" stroke-width="2.1" stroke-linejoin="round"/></svg>
<svg class="abs" style="left:0;top:670px" width="2203" height="215" viewBox="0 670 2203 215">
<rect x="22" y="683" width="1138" height="1" fill="#313131"/>
<rect x="22" y="723" width="1138" height="1" fill="#313131"/>
<rect x="22" y="763" width="1138" height="1" fill="#313131"/>
<rect x="22" y="803" width="1138" height="1" fill="#313131"/>
<rect x="22" y="842.7" width="1138" height="1" fill="#a6a6a6"/>
<rect x="136.2" y="684.6" width="57" height="158.4" fill="#089981"/>
<rect x="420" y="684.6" width="58" height="107.8" fill="#f23645"/>
<rect x="704.6" y="791.6" width="57.5" height="1.2" fill="#ff9800"/>
<rect x="988.8" y="792" width="57.5" height="51" fill="#2f7bf6"/>
<path d="M194.5 685.5H420M479.5 792.5H704.6M763.5 792.5H988.8" stroke="#9a9a9a" stroke-width="1" stroke-dasharray="3.4 2" fill="none"/>
<rect x="1236" y="707" width="967" height="1" fill="#313131"/>
<rect x="1236" y="738" width="967" height="1" fill="#313131"/>
<rect x="1236" y="770" width="967" height="1" fill="#313131"/>
<rect x="1236" y="833" width="967" height="1" fill="#313131"/>
<rect x="1236" y="802" width="967" height="1" fill="#b4b4b4"/>
<path d="M1330 803V781.1a2 2 0 0 1 2-2H1596v23.9z" fill="#b8700c"/>
<rect x="1330" y="782.7" width="266" height="20.3" fill="#ff9800"/>
<path d="M1700.4 779.9L1796.2 801.8L1700.4 802z" fill="#5a3a0c"/>
<path d="M1890.2 714.7L1796.2 801.8L1890.2 809.7z" fill="#192a4e"/>
<rect x="1796" y="738.2" width="95" height="1" fill="#3a4560" fill-opacity="0.6"/>
<rect x="1796" y="769.8" width="95" height="1" fill="#3a4560" fill-opacity="0.6"/>
<rect x="1700.4" y="802" width="190" height="1" fill="#b4b4b4"/>
<path d="M1700.4 779.9L1796.2 801.8" stroke="#b5731a" stroke-width="1.8" stroke-dasharray="2.4 2.4" fill="none"/>
<path d="M1700.4 782.6L1796.2 801.8" stroke="#f5a623" stroke-width="1.8" stroke-dasharray="2.4 2.4" fill="none"/>
<path d="M1700.4 803.6L1796.2 802.6" stroke="#3a3a3a" stroke-width="1.2" stroke-dasharray="2 2" fill="none"/>
<path d="M1890.2 714.7L1796.2 801.8" stroke="#386cc8" stroke-width="1.7" stroke-dasharray="2.4 2.4" fill="none"/>
<path d="M1890.2 809.7L1796.2 802.4" stroke="#2c5cb2" stroke-width="1.6" stroke-dasharray="2.4 2.4" fill="none"/>
<rect x="1890.2" y="714.7" width="312.79999999999995" height="94.1" fill="#2a63c6"/>
<rect x="1890.2" y="719" width="312.79999999999995" height="83.6" fill="#2f7bf6"/>
<rect x="2001.7" y="802.2" width="201.29999999999995" height="1" fill="#5b8fe8"/>
<circle cx="1796.2" cy="801.8" r="3.3" fill="#bdbdbd"/>
<rect x="1595.3" y="756.8" width="105.1" height="54.7" rx="1.5" fill="#e8841a"/>
<rect x="1595.3" y="774.2" width="105.1" height="17.2" fill="#dc8220"/>
<rect x="1595.3" y="791.4" width="105.1" height="1.6" fill="#f79414"/>
<rect x="1648.7" y="756.8" width="1.5" height="54.7" fill="#4a2a08"/>
<rect x="1890.2" y="691.9" width="111.5" height="34.7" fill="#2f7bf6"/>
<rect x="1890.2" y="709.7" width="111.5" height="16.9" fill="#2a6ae0"/>
<rect x="1890.2" y="799.5" width="111.5" height="17.5" fill="#2f7bf6"/>
<rect x="1943.6" y="691.9" width="1.2" height="34.7" fill="#1f4fa8"/>
<rect x="1943.6" y="799.5" width="1.2" height="17.5" fill="#1f4fa8"/>
</svg>
<div class="dot" style="left:443.1px;background:#1aa88e"></div>
<div class="dot" style="left:537px;background:#f23645"></div>
<div class="dot" style="left:619.3px;background:#ff9f1c"></div>
<div class="dot" style="left:716.2px;background:#3b82f6"></div>
<div class="dot" style="left:1706.4px;background:#ff9f1c"></div>
<div class="dot" style="left:1843.2px;background:#3b82f6"></div>

<div id="tx">
<span class="t" style="left:8.5px;top:14.9px;font-size:13px;color:#f0f0f0;letter-spacing:-0.50px;font-weight:700">PAKCIKKRIPTO.COM-GOLD SUPER SCALP PRO v4.6</span>
<span class="t" style="left:16.5px;top:52.1px;font-size:13px;color:#1f1f1f;letter-spacing:0.35px;-webkit-text-stroke:0.3px #1f1f1f">Metrics</span>
<span class="t" style="left:87.5px;top:52.1px;font-size:13px;color:#dbdbdb;letter-spacing:0.42px;-webkit-text-stroke:0.3px #dbdbdb">List of trades</span>
<span class="t" style="left:7.0px;top:100.3px;font-size:15px;color:#8c8c8c;letter-spacing:0.07px;-webkit-text-stroke:0.3px #8c8c8c">Total P&amp;L</span>
<span class="t" style="left:492.6px;top:100.3px;font-size:15px;color:#8c8c8c;letter-spacing:0.36px;-webkit-text-stroke:0.3px #8c8c8c">Max equity drawdown</span>
<span class="t" style="left:982.0px;top:100.3px;font-size:15px;color:#8c8c8c;letter-spacing:0.35px;-webkit-text-stroke:0.3px #8c8c8c">Total trades</span>
<span class="t" style="left:1468.0px;top:100.3px;font-size:15px;color:#8c8c8c;letter-spacing:0.42px;-webkit-text-stroke:0.3px #8c8c8c">Profitable trades</span>
<span class="t" style="left:1955.6px;top:100.3px;font-size:15px;color:#8c8c8c;letter-spacing:0.62px;-webkit-text-stroke:0.3px #8c8c8c">Profit factor</span>
<span class="t" style="left:6.4px;top:125.5px;font-size:14px;color:#2a9d8a;letter-spacing:0.56px;-webkit-text-stroke:0.3px #2a9d8a">+2,628.99</span>
<span class="t" style="left:74.7px;top:129.7px;font-size:9px;color:#2a9d8a;letter-spacing:0.65px;-webkit-text-stroke:0.3px #2a9d8a">USD</span>
<span class="t" style="left:103.0px;top:125.5px;font-size:14px;color:#2a9d8a;letter-spacing:-0.03px;-webkit-text-stroke:0.3px #2a9d8a">+262.90%</span>
<span class="t" style="left:493.3px;top:125.5px;font-size:14px;color:#dbdbdb;letter-spacing:0.70px;-webkit-text-stroke:0.3px #dbdbdb">732.19</span>
<span class="t" style="left:541.0px;top:129.7px;font-size:9px;color:#dbdbdb;letter-spacing:0.30px;-webkit-text-stroke:0.3px #dbdbdb">USD</span>
<span class="t" style="left:568.2px;top:125.5px;font-size:14px;color:#dbdbdb;letter-spacing:0.06px;-webkit-text-stroke:0.3px #dbdbdb">23.82%</span>
<span class="t" style="left:980.6px;top:125.5px;font-size:14px;color:#dbdbdb;letter-spacing:0.90px;-webkit-text-stroke:0.3px #dbdbdb">358</span>
<span class="t" style="left:1468.0px;top:125.5px;font-size:14px;color:#dbdbdb;letter-spacing:-0.02px;-webkit-text-stroke:0.3px #dbdbdb">50.84%</span>
<span class="t" style="left:1523.5px;top:125.5px;font-size:14px;color:#dbdbdb;letter-spacing:1.02px;-webkit-text-stroke:0.3px #dbdbdb">182/358</span>
<span class="t" style="left:1956.2px;top:125.5px;font-size:14px;color:#dbdbdb;letter-spacing:0.62px;-webkit-text-stroke:0.3px #dbdbdb">1.465</span>
<span class="t" style="left:5.1px;top:169.0px;font-size:13px;color:#dbdbdb;letter-spacing:0.27px;font-weight:700">Equity chart</span>
<span class="t" style="left:5.0px;top:490.0px;font-size:11px;color:#b2b2b2;letter-spacing:0.00px;-webkit-text-stroke:0.35px #b2b2b2">2</span>
<span class="t" style="left:88.0px;top:490.0px;font-size:11px;color:#b2b2b2;letter-spacing:1.00px;-webkit-text-stroke:0.35px #b2b2b2">10</span>
<span class="t" style="left:215.0px;top:490.0px;font-size:11px;color:#b2b2b2;letter-spacing:0.50px;-webkit-text-stroke:0.35px #b2b2b2">May</span>
<span class="t" style="left:299.0px;top:490.0px;font-size:11px;color:#b2b2b2;letter-spacing:1.00px;-webkit-text-stroke:0.35px #b2b2b2">15</span>
<span class="t" style="left:409.5px;top:490.0px;font-size:11px;color:#b2b2b2;letter-spacing:0.75px;-webkit-text-stroke:0.35px #b2b2b2">Jun</span>
<span class="t" style="left:497.0px;top:490.0px;font-size:11px;color:#b2b2b2;letter-spacing:1.00px;-webkit-text-stroke:0.35px #b2b2b2">11</span>
<span class="t" style="left:603.0px;top:490.0px;font-size:11px;color:#b2b2b2;letter-spacing:1.00px;-webkit-text-stroke:0.35px #b2b2b2">Jul</span>
<span class="t" style="left:689.5px;top:490.0px;font-size:11px;color:#b2b2b2;letter-spacing:1.00px;-webkit-text-stroke:0.35px #b2b2b2">14</span>
<span class="t" style="left:785.5px;top:490.0px;font-size:11px;color:#b2b2b2;letter-spacing:0.25px;-webkit-text-stroke:0.35px #b2b2b2">Aug</span>
<span class="t" style="left:874.0px;top:490.0px;font-size:11px;color:#b2b2b2;letter-spacing:1.00px;-webkit-text-stroke:0.35px #b2b2b2">14</span>
<span class="t" style="left:996.0px;top:490.0px;font-size:11px;color:#b2b2b2;letter-spacing:0.50px;-webkit-text-stroke:0.35px #b2b2b2">Sep</span>
<span class="t" style="left:1086.5px;top:490.0px;font-size:11px;color:#b2b2b2;letter-spacing:1.00px;-webkit-text-stroke:0.35px #b2b2b2">10</span>
<span class="t" style="left:1165.0px;top:490.0px;font-size:11px;color:#b2b2b2;letter-spacing:1.00px;-webkit-text-stroke:0.35px #b2b2b2">22</span>
<span class="t" style="left:1261.7px;top:490.0px;font-size:11px;color:#b2b2b2;letter-spacing:0.65px;-webkit-text-stroke:0.35px #b2b2b2">Oct</span>
<span class="t" style="left:1367.4px;top:490.0px;font-size:11px;color:#b2b2b2;letter-spacing:0.00px;-webkit-text-stroke:0.35px #b2b2b2">8</span>
<span class="t" style="left:1443.5px;top:490.0px;font-size:11px;color:#b2b2b2;letter-spacing:1.00px;-webkit-text-stroke:0.35px #b2b2b2">14</span>
<span class="t" style="left:1522.0px;top:490.0px;font-size:11px;color:#b2b2b2;letter-spacing:1.00px;-webkit-text-stroke:0.35px #b2b2b2">23</span>
<span class="t" style="left:1604.7px;top:490.0px;font-size:11px;color:#b2b2b2;letter-spacing:0.50px;-webkit-text-stroke:0.35px #b2b2b2">Nov</span>
<span class="t" style="left:1687.8px;top:490.0px;font-size:11px;color:#b2b2b2;letter-spacing:0.50px;-webkit-text-stroke:0.35px #b2b2b2">13</span>
<span class="t" style="left:1783.4px;top:490.0px;font-size:11px;color:#b2b2b2;letter-spacing:0.50px;-webkit-text-stroke:0.35px #b2b2b2">Dec</span>
<span class="t" style="left:1873.0px;top:490.0px;font-size:11px;color:#b2b2b2;letter-spacing:1.00px;-webkit-text-stroke:0.35px #b2b2b2">11</span>
<span class="t" style="left:2018.7px;top:490.0px;font-size:11px;color:#dbdbdb;letter-spacing:0.87px;font-weight:700">2026</span>
<span class="t" style="left:2117.8px;top:490.0px;font-size:11px;color:#b2b2b2;letter-spacing:0.50px;-webkit-text-stroke:0.35px #b2b2b2">13</span>
<span class="t" style="left:30.6px;top:523.2px;font-size:13px;color:#dbdbdb;letter-spacing:0.38px;-webkit-text-stroke:0.3px #dbdbdb">Buy &amp; hold</span>
<span class="t" style="left:152.5px;top:523.2px;font-size:13px;color:#dbdbdb;letter-spacing:-0.01px;-webkit-text-stroke:0.3px #dbdbdb">Trades excursions</span>
<span class="t" style="left:46.9px;top:601.6px;font-size:16.5px;color:#e6e6e6;letter-spacing:0.26px;font-weight:700">Performance</span>
<span class="t" style="left:21.5px;top:649.1px;font-size:13px;color:#dbdbdb;letter-spacing:0.31px;font-weight:700">Profit structure</span>
<span class="t" style="left:1235.5px;top:649.1px;font-size:13px;color:#dbdbdb;letter-spacing:0.09px;font-weight:700">Benchmarking</span>
<span class="t" style="left:1175.3px;top:678.2px;font-size:10.5px;color:#c8c8c8;letter-spacing:0.18px;font-weight:700">8.40 K</span>
<span class="t" style="left:1175.3px;top:717.3px;font-size:10.5px;color:#c8c8c8;letter-spacing:0.18px;font-weight:700">6.30 K</span>
<span class="t" style="left:1175.3px;top:756.4px;font-size:10.5px;color:#c8c8c8;letter-spacing:0.18px;font-weight:700">4.20 K</span>
<span class="t" style="left:1175.3px;top:795.0px;font-size:10.5px;color:#c8c8c8;letter-spacing:0.18px;font-weight:700">2.10 K</span>
<span class="t" style="left:1183.8px;top:834.1px;font-size:10.5px;color:#c8c8c8;letter-spacing:0.80px;font-weight:700">0.00</span>
<span class="t" style="left:459.9px;top:861.6px;font-size:12px;color:#8f8f8f;letter-spacing:0.60px;-webkit-text-stroke:0.3px #8f8f8f">Total profit</span>
<span class="t" style="left:553.4px;top:861.6px;font-size:12px;color:#8f8f8f;letter-spacing:0.10px;-webkit-text-stroke:0.3px #8f8f8f">Total loss</span>
<span class="t" style="left:634.2px;top:861.6px;font-size:12px;color:#8f8f8f;letter-spacing:0.13px;-webkit-text-stroke:0.3px #8f8f8f">Commission</span>
<span class="t" style="left:732.3px;top:861.6px;font-size:12px;color:#8f8f8f;letter-spacing:0.09px;-webkit-text-stroke:0.3px #8f8f8f">Total P&amp;L</span>
<span class="t" style="left:1721.6px;top:861.6px;font-size:12px;color:#8f8f8f;letter-spacing:0.39px;-webkit-text-stroke:0.3px #8f8f8f">P&amp;L for buy &amp; hold</span>
<span class="t" style="left:1857.9px;top:861.6px;font-size:12px;color:#8f8f8f;letter-spacing:0.33px;-webkit-text-stroke:0.3px #8f8f8f">P&amp;L for strategy</span>
<span class="t" style="left:1600.2px;top:759.8px;font-size:10.5px;color:#fff3e0;letter-spacing:1.15px;font-weight:700">Max</span>
<span class="t" style="left:1656.3px;top:759.8px;font-size:10.5px;color:#fff3e0;letter-spacing:0.58px;font-weight:700">71.12%</span>
<span class="t" style="left:1601.2px;top:777.5px;font-size:10.5px;color:#fff3e0;letter-spacing:0.63px;font-weight:700">Current</span>
<span class="t" style="left:1656.3px;top:777.5px;font-size:10.5px;color:#fff3e0;letter-spacing:0.58px;font-weight:700">59.26%</span>
<span class="t" style="left:1600.2px;top:797.7px;font-size:10.5px;color:#fff3e0;letter-spacing:0.95px;font-weight:700">Min</span>
<span class="t" style="left:1655.3px;top:797.7px;font-size:10.5px;color:#fff3e0;letter-spacing:0.58px;font-weight:700">−3.69%</span>
<span class="t" style="left:1895.1px;top:695.3px;font-size:11px;color:#eef4ff;letter-spacing:0.75px;font-weight:700">Max</span>
<span class="t" style="left:1951.5px;top:695.3px;font-size:11px;color:#eef4ff;letter-spacing:0.27px;font-weight:700">270.19%</span>
<span class="t" style="left:1896.1px;top:712.2px;font-size:11px;color:#eef4ff;letter-spacing:0.40px;font-weight:700">Current</span>
<span class="t" style="left:1951.5px;top:712.2px;font-size:11px;color:#eef4ff;letter-spacing:0.27px;font-weight:700">262.90%</span>
<span class="t" style="left:1895.1px;top:802.1px;font-size:11px;color:#eef4ff;letter-spacing:1.00px;font-weight:700">Min</span>
<span class="t" style="left:1951.5px;top:802.1px;font-size:11px;color:#eef4ff;letter-spacing:0.10px;font-weight:700">−19.98%</span>
</div>
</body></html>
